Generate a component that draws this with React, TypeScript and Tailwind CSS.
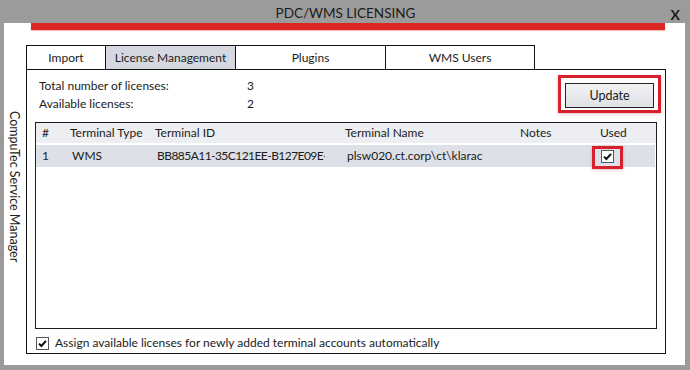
import React from 'react';

const tabs = [
  { label: 'Import', w: 'w-[80px]' },
  { label: 'License Management', w: 'w-[130px]', active: true },
  { label: 'Plugins', w: 'w-[150px]' },
  { label: 'WMS Users', w: 'w-[149px]' },
];

function Check({ size = 13 }: { size?: number }) {
  return (
    <span className="flex items-center justify-center w-[13px] h-[13px] border border-[#555] bg-white">
      <svg width={size - 2} height={size - 2} viewBox="0 0 11 11">
        <polyline points="2,5.6 4.4,8 9,2.8" fill="none" stroke="#111" strokeWidth="2" />
      </svg>
    </span>
  );
}

export default function App() {
  return (
    <div className="w-[690px] h-[370px] bg-[#9b9b9b] flex flex-col text-[#1b1b1b] font-['Lato',sans-serif] text-[12px]">
      {/* title bar */}
      <div className="h-[23px] grid grid-cols-[1fr_auto_1fr] items-center">
        <div />
        <div className="text-[13.5px] pt-[1px] pl-[1px]">PDC/WMS LICENSING</div>
        <div className="flex justify-end pr-[10px] pt-[4px] text-[14px] font-bold">X</div>
      </div>

      <div className="flex-1 ml-[4px] mr-[5px] mb-[5px] bg-white flex">
        {/* side label */}
        <div className="w-[22px] flex items-center justify-center pb-[14px]">
          <span className="[writing-mode:vertical-rl] text-[12.5px] text-[#222] pr-[2px]">CompuTec Service Manager</span>
        </div>

        <div className="flex flex-col w-[640px]">
          <div className="ml-[5px] mr-[1px] h-[7px] bg-[#db2824] shadow-[0_1px_1px_rgba(219,40,36,0.3)]" />

          {/* tabs */}
          <div className="flex mt-[15px] h-[24px]">
            {tabs.map((t, i) => (
              <div
                key={t.label}
                className={`${t.w} flex items-center justify-center border-t border-r border-[#111] ${i === 0 ? 'border-l' : ''} ${t.active ? 'bg-[#d5d8e0]' : 'bg-white'}`}
              >
                {t.label}
              </div>
            ))}
          </div>

          {/* content box */}
          <div className="h-[285px] border border-[#111] px-[8px] pb-[2px] flex flex-col">
            <div className="h-[38px] flex justify-between items-start pt-[13px]">
              <div className="mt-[-6px] ml-[4px] grid grid-cols-[208px_auto] leading-[18px]">
                <span>Total number of licenses:</span>
                <span>3</span>
                <span>Available licenses:</span>
                <span>2</span>
              </div>
              <div className="relative mr-[3px]">
                <button className="block w-[89px] h-[25px] border border-[#222] bg-gradient-to-b from-[#f1f2f4] to-[#dfe1e5] text-[12.5px] pt-[1px]">
                  Update
                </button>
                <span className="absolute -left-[7px] -right-[7px] -top-[8px] -bottom-[5px] border-[3px] border-[#d6202c] shadow-[0_1px_3px_rgba(200,0,0,0.25)]" />
              </div>
            </div>

            {/* table */}
            <div className="mt-[14px] flex-1 border border-[#1e1e1e] flex flex-col">
              <div className="flex h-[20px] items-center bg-[#eceef1]">
                <div className="w-[28px] pl-[6px]">#</div>
                <div className="w-[85px] pl-[6px]">Terminal Type</div>
                <div className="w-[190px] pl-[6px]">Terminal ID</div>
                <div className="w-[175px] pl-[6px]">Terminal Name</div>
                <div className="w-[80px] pl-[6px]">Notes</div>
                <div className="flex-1 pl-[6px]">Used</div>
              </div>
              <div className="flex h-[22px] items-center bg-[#dde0e7] mt-[2px] mr-[1px]">
                <div className="w-[28px] pl-[6px]">1</div>
                <div className="w-[85px] pl-[8px]">WMS</div>
                <div className="w-[190px] pl-[8px]">
                  <div className="w-[168px] overflow-hidden whitespace-nowrap tracking-[-0.55px]">BB885A11-35C121EE-B127E09E-6A1F</div>
                </div>
                <div className="w-[175px] pl-[8px] whitespace-nowrap">plsw020.ct.corp\ct\klarac</div>
                <div className="w-[80px]" />
                <div className="flex-1 pl-[7px] flex items-center">
                  <span className="relative">
                    <Check />
                    <span className="absolute -left-[9px] -right-[9px] -top-[4px] -bottom-[6px] border-[3px] border-[#d6202c] shadow-[0_1px_3px_rgba(200,0,0,0.25)]" />
                  </span>
                </div>
              </div>
            </div>

            <div className="mt-[6px] h-[16px] flex items-center gap-[6px] ml-[1px]">
              <Check />
              <span>Assign available licenses for newly added terminal accounts automatically</span>
            </div>
          </div>
        </div>
      </div>
    </div>
  );
}
